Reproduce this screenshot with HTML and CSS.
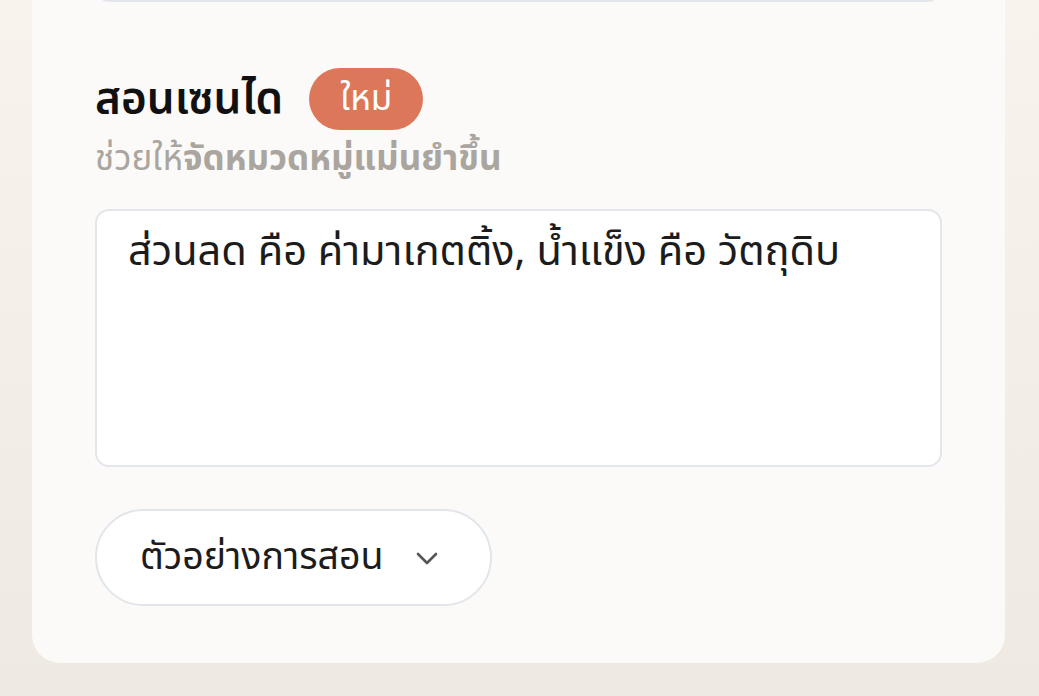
FILE: index.html
```html
<!DOCTYPE html>
<html lang="th">
<head>
  <meta charset="UTF-8" />
  <meta name="viewport" content="width=device-width, initial-scale=1.0"/>
  <title>สอนเซนได</title>
  <link rel="stylesheet" href="styles.css">
</head>
<body>
<div class="card">
  <div class="prev-field"></div>

  <div class="title-row">
    <h2>สอนเซนได</h2>
    <span class="badge">ใหม่</span>
  </div>
  <p class="hint">ช่วยให้<b>จัดหมวดหมู่แม่นยำขึ้น</b></p>

  <div class="teach-box">ส่วนลด คือ ค่ามาเกตติ้ง, น้ำแข็ง คือ วัตถุดิบ</div>

  <button class="examples-btn">
    <span>ตัวอย่างการสอน</span>
    <svg width="24" height="24" viewBox="0 0 24 24" fill="none" stroke="#555" stroke-width="2.6" stroke-linecap="round" stroke-linejoin="round">
      <path d="M3 8l9 9 9-9"/>
    </svg>
  </button>
</div>
</body>
</html>
```

FILE: styles.css
```css
body {
  margin: 0;
  min-height: 100vh;
  background: linear-gradient(#f8f4ed, #eeeae1);
  font-family: "Noto Sans Thai", "Noto Sans", sans-serif;
  overflow: hidden;
}

.card {
  width: 973px;
  margin: -40px 0 0 32px;
  padding: 0 63px 57px;
  box-sizing: border-box;
  background-color: #fbfaf8;
  border-radius: 28px;
}

.prev-field {
  height: 42px;
  border: 2px solid #e3e6ec;
  border-top: none;
  border-radius: 0 0 14px 14px;
  box-sizing: border-box;
  background-color: #fff;
}

.title-row {
  display: flex;
  align-items: center;
  gap: 26px;
  margin-top: 66px;
  height: 62px;
}

.title-row h2 {
  margin: 0;
  font-size: 44px;
  font-weight: 600;
  color: #111;
}

.badge {
  display: inline-flex;
  align-items: center;
  justify-content: center;
  width: 114px;
  height: 62px;
  border-radius: 31px;
  background-color: #dc7759;
  color: #fff;
  font-size: 35px;
}

.hint {
  margin: 9px 0 0;
  font-size: 35px;
  line-height: 42px;
  color: #aaa69f;
}

.hint b {
  font-weight: 700;
}

.teach-box {
  margin-top: 28px;
  height: 258px;
  padding: 14px 31px;
  box-sizing: border-box;
  border: 2px solid #e4e6eb;
  border-radius: 14px;
  background-color: #fff;
  font-size: 41.5px;
  line-height: 56px;
  color: #1c1c1c;
}

.examples-btn {
  display: flex;
  align-items: center;
  gap: 32px;
  margin-top: 42px;
  height: 97px;
  padding: 0 51px 0 43px;
  border: 2px solid #e3e5ea;
  border-radius: 49px;
  background-color: #fff;
  font-family: inherit;
  font-size: 37.5px;
  color: #1c1c1c;
}
```
